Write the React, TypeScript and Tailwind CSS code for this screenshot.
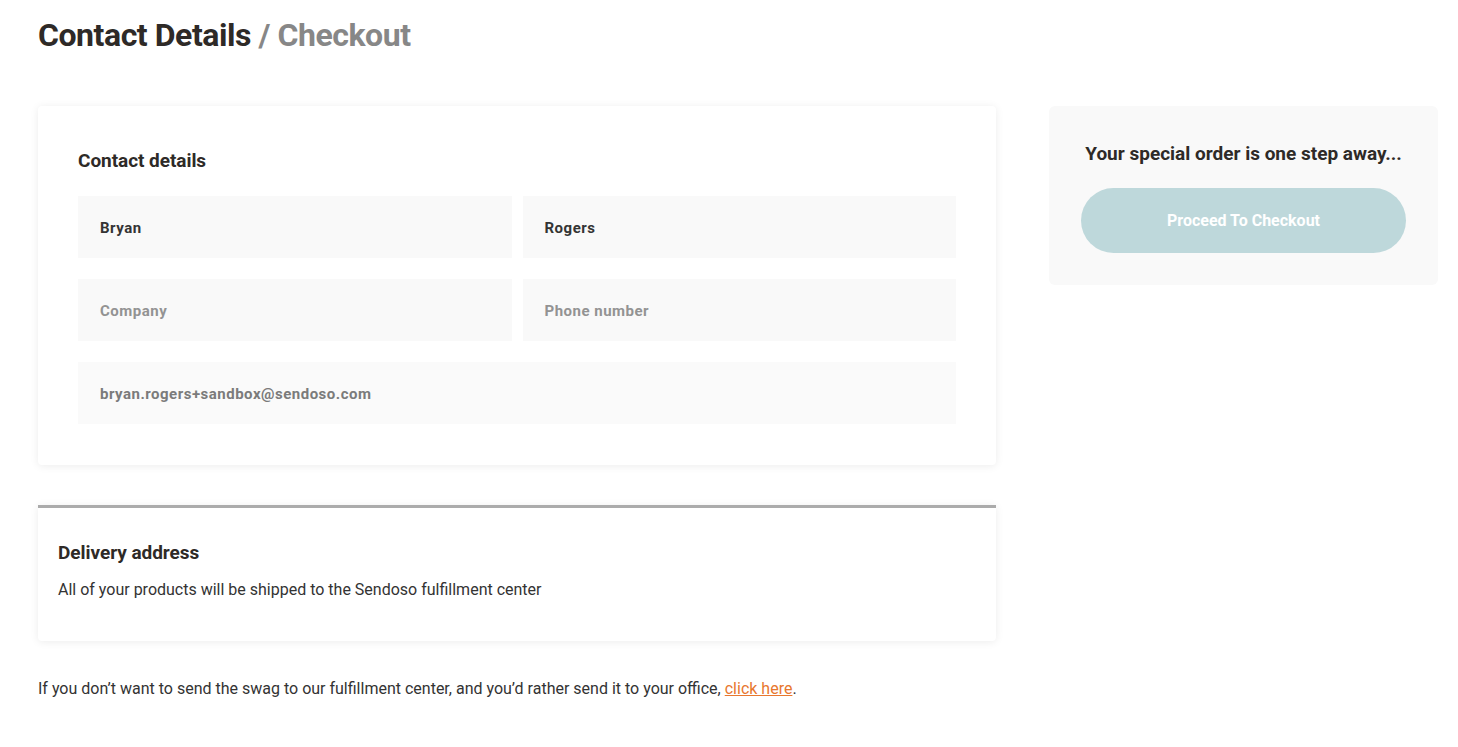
import React from "react";

function Field({ value, placeholder, muted, className = "" }: { value?: string; placeholder?: string; muted?: boolean; className?: string }) {
  return (
    <div className={`h-[62px] bg-[#f9f9f9] flex items-center pl-[22px] pt-[2px] ${className}`}>
      {value ? (
        <span className={`text-[15px] font-bold tracking-[0.5px] ${muted ? "text-[#7b7b7b]" : "text-[#343434]"}`}>{value}</span>
      ) : (
        <span className="text-[15px] font-bold tracking-[0.5px] text-[#939393]">{placeholder}</span>
      )}
    </div>
  );
}

export default function App() {
  return (
    <div className="min-h-[747px] bg-white pl-[38px] pr-[20px] pt-[15px] text-[#2e2a27]" style={{ fontFamily: "Roboto, 'Liberation Sans', sans-serif" }}>
      <h1 className="text-[32px] leading-[40px] font-bold tracking-[-0.45px]">
        Contact Details <span className="text-[#878787]">/ Checkout</span>
      </h1>
      <div className="flex gap-[53px] mt-[51px]">
        <div className="w-[958px] shrink-0">
          <div className="bg-white rounded-[4px] shadow-[0_1px_8px_rgba(0,0,0,0.08)] px-10 pt-[43px] pb-[41px]">
            <h2 className="text-[19px] leading-[24px] font-bold tracking-[-0.05px]">Contact details</h2>
            <div className="grid grid-cols-2 gap-x-[11px] gap-y-[21px] mt-[23px]">
              <Field value="Bryan" />
              <Field value="Rogers" />
              <Field placeholder="Company" />
              <Field placeholder="Phone number" />
              <Field value="bryan.rogers+sandbox@sendoso.com" muted className="col-span-2 bg-[#fafafa]" />
            </div>
          </div>
          <div className="mt-[40px] bg-white rounded-b-[4px] border-t-[3px] border-[#ababab] shadow-[0_1px_8px_rgba(0,0,0,0.08)] pl-5 pt-[33px] pb-[40px]">
            <h2 className="text-[19px] leading-[24px] font-bold tracking-[-0.05px]">Delivery address</h2>
            <p className="mt-[14px] text-[16px] leading-[22px] text-[#333]">All of your products will be shipped to the Sendoso fulfillment center</p>
          </div>
          <p className="mt-[37px] text-[16px] leading-[22px] text-[#333]">
            If you don’t want to send the swag to our fulfillment center, and you’d rather send it to your office,{" "}
            <a href="#" className="text-[#e8772e] underline">click here</a>.
          </p>
        </div>
        <div className="w-[389px] shrink-0">
          <div className="bg-[#f9f9f9] rounded-[6px] px-8 pt-[36px] pb-[32px]">
            <p className="text-center text-[19px] leading-[24px] font-bold">Your special order is one step away...</p>
            <button className="mt-[22px] w-full h-[65px] rounded-full bg-[#bed8db] text-white text-[16px] font-bold">
              Proceed To Checkout
            </button>
          </div>
        </div>
      </div>
    </div>
  );
}
